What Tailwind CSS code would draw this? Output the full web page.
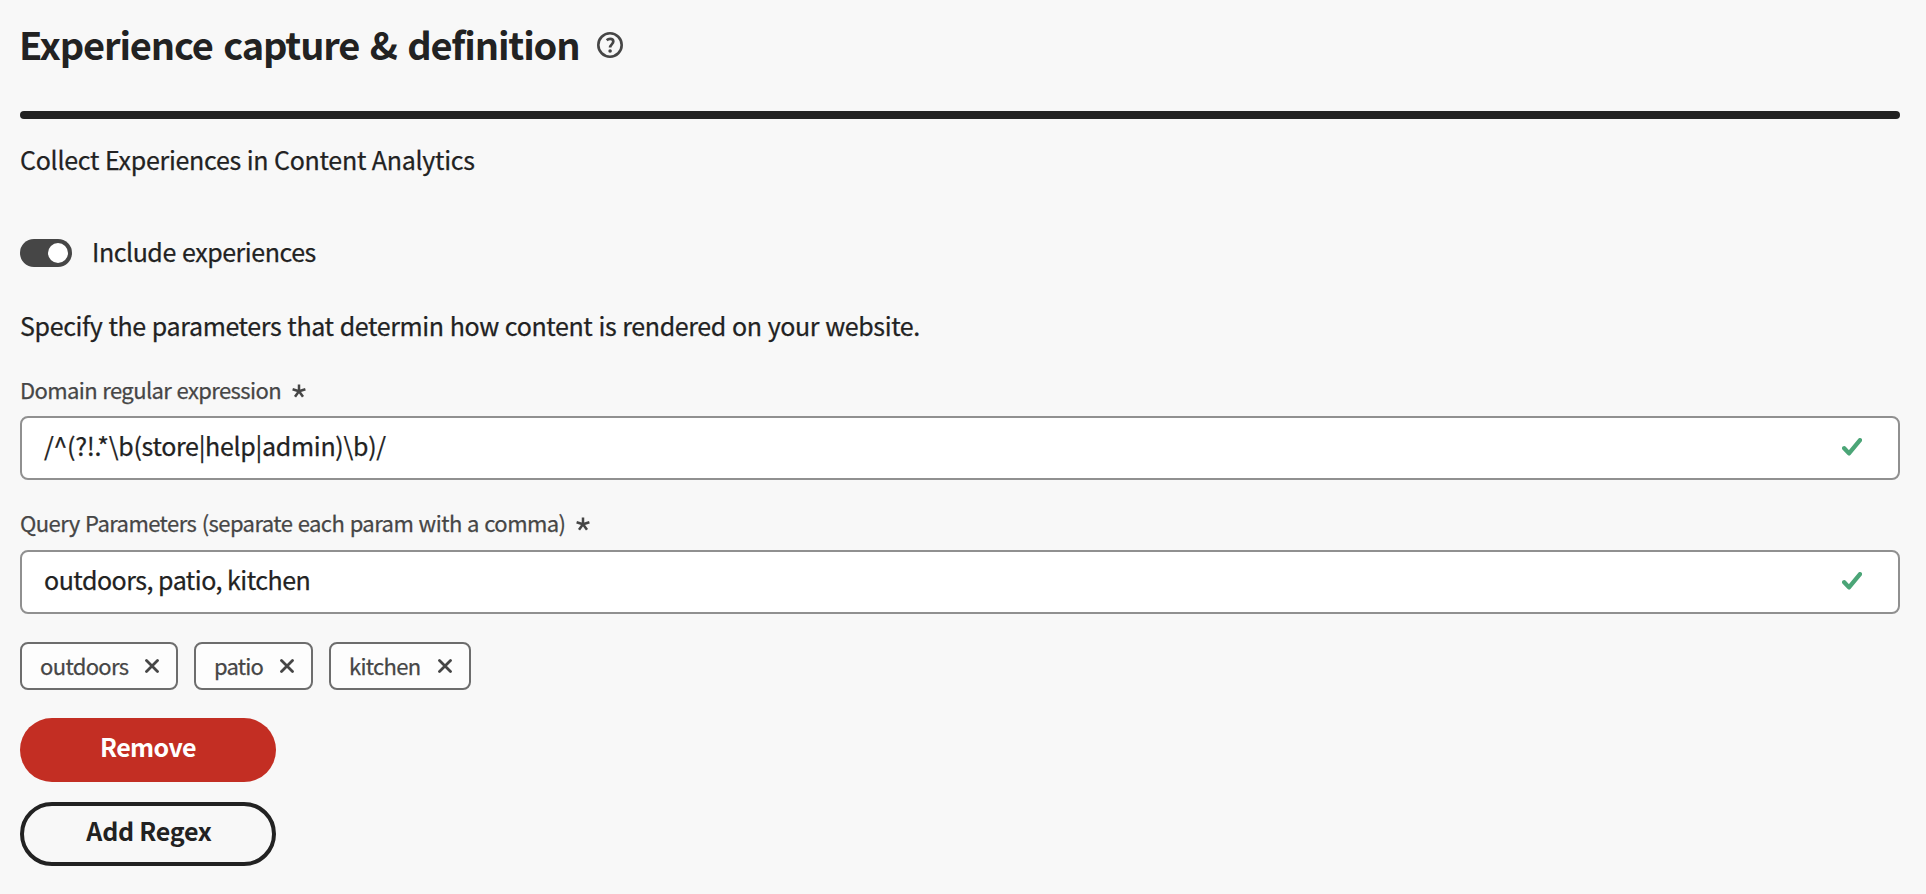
<!DOCTYPE html>
<html lang="en">
<head>
<meta charset="utf-8">
<title>Experience capture &amp; definition</title>
<script src="https://cdn.jsdelivr.net/npm/@tailwindcss/browser@4"></script>
</head>
<body class="bg-[#f8f8f8] font-['Noto_Sans_CJK_SC','Open_Sans',sans-serif] text-[#222222] [-webkit-text-stroke:0.25px_currentColor]">
<svg class="hidden">
  <symbol id="star" viewBox="0 0 14 14"><path d="M7 7.2V.6M7 7.2L.6 5.2M7 7.2l6.400-2M7 7.2L3 12.800M7 7.2l4 5.600" fill="none" stroke="currentColor" stroke-width="2.500"/></symbol>
  <symbol id="cross" viewBox="0 0 14 14"><path d="M1.5 1.5l11 11M12.5 1.5l-11 11" fill="none" stroke="currentColor" stroke-width="2.8" stroke-linecap="round"/></symbol>
  <symbol id="check" viewBox="0 0 20 18"><path d="M2.2 10.2L7 15.4 18 2.2" fill="none" stroke="currentColor" stroke-width="4.300" stroke-linecap="round" stroke-linejoin="round"/></symbol>
</svg>
<main class="flex h-[894px] w-[1926px] flex-col pr-[26px] pl-5">
  <header class="flex h-[111px] items-start pt-4">
    <h1 class="-ml-px w-[578px] text-[38px] leading-14 font-bold tracking-[-1.13px] whitespace-nowrap [-webkit-text-stroke:0] [word-spacing:3px]">Experience capture &amp; definition</h1>
    <svg class="mt-4 h-[26px] w-[26px] text-[#464646]" viewBox="0 0 26 26" fill="none" stroke="currentColor">
      <circle cx="13" cy="13" r="11.7" stroke-width="2.600"/>
      <path d="M9.700 8.200c1-.9 2.200-1.300 3.400-1.300 1.900 0 3.200 1 3.200 2.700 0 2.700-3.200 2.900-3.200 6" stroke-width="2.700"/>
      <circle cx="13.100" cy="19" r="1.800" fill="currentColor" stroke="none"/>
    </svg>
  </header>
  <div class="h-2 shrink-0 rounded-full bg-[#222222]"></div>
  <p class="mt-6 text-[25px] leading-8 tracking-[-0.27px] [word-spacing:0.4px]">Collect Experiences in Content Analytics</p>
  <div class="mt-[60px] flex h-8 items-start gap-5">
    <div class="mt-1 flex h-7 w-[52px] items-center justify-end rounded-full bg-[#464646] pr-1">
      <div class="size-5 rounded-full bg-white"></div>
    </div>
    <span class="text-[25px] leading-8 tracking-[-0.45px] [word-spacing:1px]">Include experiences</span>
  </div>
  <p class="mt-[42px] text-[25px] leading-8 tracking-[-0.37px] [word-spacing:0.8px]">Specify the parameters that determin how content is rendered on your website.</p>

  <div class="mt-[34px] flex h-7 items-start text-[#464646]">
    <label class="w-[272px] text-[22px] leading-7 tracking-[-0.61px] whitespace-nowrap [word-spacing:1px]">Domain regular expression</label>
    <svg class="mt-[9px] size-[14px]"><use href="#star"/></svg>
  </div>
  <div class="mt-[13px] flex h-16 items-center justify-between rounded-lg border-2 border-[#909090] bg-white pr-9 pl-[22px]">
    <span class="pb-1.5 text-[25px] leading-8 tracking-[-0.3px]">/^(?!.*\b(store|help|admin)\b)/</span>
    <svg class="mb-0.5 h-[18px] w-5 text-[#4ba577]"><use href="#check"/></svg>
  </div>

  <div class="mt-7 flex h-7 items-start text-[#464646]">
    <label class="w-[556px] text-[22px] leading-7 tracking-[-0.56px] whitespace-nowrap [word-spacing:1px]">Query Parameters (separate each param with a comma)</label>
    <svg class="mt-[9px] size-[14px]"><use href="#star"/></svg>
  </div>
  <div class="mt-[14px] flex h-16 items-center justify-between rounded-lg border-2 border-[#909090] bg-white pr-9 pl-[22px]">
    <span class="pb-1.5 text-[25px] leading-8 tracking-[-0.5px]">outdoors, patio, kitchen</span>
    <svg class="mb-0.5 h-[18px] w-5 text-[#4ba577]"><use href="#check"/></svg>
  </div>

  <div class="mt-7 flex h-12 gap-4 text-[22px] leading-7 text-[#464646]">
    <div class="flex w-[158px] items-center justify-between rounded-lg border-2 border-[#6d6d6d] bg-[#fdfdfd] px-[17px]">
      <span class="pb-0.5 pl-px tracking-[-0.65px]">outdoors</span><svg class="size-[14px]"><use href="#cross"/></svg>
    </div>
    <div class="flex w-[119px] items-center justify-between rounded-lg border-2 border-[#6d6d6d] bg-[#fdfdfd] px-[17px]">
      <span class="pb-0.5 pl-px tracking-[-0.8px]">patio</span><svg class="size-[14px]"><use href="#cross"/></svg>
    </div>
    <div class="flex w-[142px] items-center justify-between rounded-lg border-2 border-[#6d6d6d] bg-[#fdfdfd] px-[17px]">
      <span class="pb-0.5 pl-px tracking-[-0.7px]">kitchen</span><svg class="size-[14px]"><use href="#cross"/></svg>
    </div>
  </div>

  <button class="mt-7 h-16 w-64 rounded-full bg-[#c32e23] pb-2 text-[25px] leading-8 font-bold tracking-[-0.6px] text-white [-webkit-text-stroke:0]">Remove</button>
  <button class="mt-5 h-16 w-64 rounded-full border-4 border-[#222222] pb-2 pl-0.5 text-[25px] leading-8 font-bold tracking-[-0.25px] [-webkit-text-stroke:0]">Add Regex</button>
</main>
</body>
</html>
